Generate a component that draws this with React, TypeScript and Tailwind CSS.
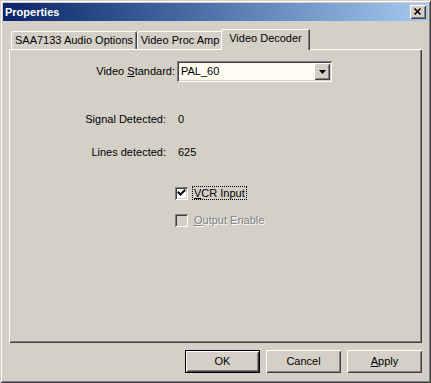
import React from "react";

const raised =
  "shadow-[inset_1px_1px_#ffffff,inset_-1px_-1px_#404040,inset_2px_2px_#d4d0c8,inset_-2px_-2px_#808080]";
const sunken =
  "shadow-[inset_1px_1px_#808080,inset_-1px_-1px_#ffffff,inset_2px_2px_#404040,inset_-2px_-2px_#d4d0c8]";

function Check() {
  return (
    <svg width="13" height="13" viewBox="0 0 13 13" className="block">
      <path d="M3.5 5.5 L5.5 7.5 L9.5 3.5" stroke="#000" strokeWidth="2" fill="none" strokeLinecap="square" />
    </svg>
  );
}

export default function App() {
  return (
    <div className="w-[431px] h-[383px] bg-[#d4d0c8] p-[3px] flex flex-col [font-family:'Liberation_Sans',Arial,sans-serif] text-[11px] leading-[13px] text-black shadow-[inset_1px_1px_#d4d0c8,inset_-1px_-1px_#404040,inset_2px_2px_#ffffff,inset_-2px_-2px_#808080]">
      {/* Title bar */}
      <div className="h-[18px] flex items-center justify-between pl-[2px] pr-[2px] bg-linear-to-r from-[#0a246a] to-[#a6caf0]">
        <span className="text-white font-bold text-[11px]">Properties</span>
        <div className={`w-[16px] h-[14px] bg-[#d4d0c8] ${raised} flex items-center justify-center`}>
          <svg width="16" height="14" viewBox="0 0 16 14" className="block">
            <path d="M4.5 3.5 L10.5 9.5 M10.5 3.5 L4.5 9.5" stroke="#000" strokeWidth="1.6" fill="none" />
          </svg>
        </div>
      </div>

      {/* Body */}
      <div className="flex-1 flex flex-col px-[6px]">
        {/* Tabs */}
        <div className="mt-[8px] h-[20px] flex items-end pl-[2px] relative z-10">
          <div className="w-[126px] h-[18px] rounded-t-[2px] flex items-center justify-center shadow-[inset_1px_1px_#ffffff,inset_-1px_0_#404040,inset_-2px_0_#808080]">
            SAA7133 Audio Options
          </div>
          <div className="w-[86px] h-[18px] rounded-t-[2px] flex items-center justify-center shadow-[inset_1px_1px_#ffffff,inset_-1px_0_#404040,inset_-2px_0_#808080]">
            Video Proc Amp
          </div>
          <div className="-ml-[2px] w-[89px] h-[21px] -mb-[1px] pb-[2px] rounded-t-[2px] bg-[#d4d0c8] flex items-center justify-center shadow-[inset_1px_1px_#ffffff,inset_-1px_0_#404040,inset_-2px_0_#808080]">
            Video Decoder
          </div>
        </div>

        {/* Panel */}
        <div className="h-[294px] bg-[#d4d0c8] flex flex-col shadow-[inset_1px_1px_#ffffff,inset_-1px_-1px_#404040,inset_-2px_-2px_#808080]">
          <div className="mt-[12px] flex items-center h-[21px]">
            <div className="w-[166px] text-right">
              Video <u>S</u>tandard:
            </div>
            <div className={`ml-[2px] w-[155px] h-[21px] bg-[#fffbf0] ${sunken} flex items-center p-[2px]`}>
              <span className="flex-1 pl-[2px]">PAL_60</span>
              <div className={`w-[16px] h-[17px] bg-[#d4d0c8] ${raised} flex items-center justify-center`}>
                <svg width="7" height="4" viewBox="0 0 7 4" className="block">
                  <path d="M0 0 H7 L3.5 4 Z" fill="#000" />
                </svg>
              </div>
            </div>
          </div>

          <div className="mt-[31px] flex items-center h-[13px]">
            <div className="w-[157px] text-right">Signal Detected:</div>
            <div className="ml-[12px]">0</div>
          </div>

          <div className="mt-[20px] flex items-center h-[13px]">
            <div className="w-[157px] text-right">Lines detected:</div>
            <div className="ml-[12px]">625</div>
          </div>

          <div className="mt-[27px] flex items-center h-[14px] pl-[166px]">
            <div className={`w-[13px] h-[13px] bg-white ${sunken}`}>
              <Check />
            </div>
            <div className="ml-[4px] border border-dotted border-black px-[1px] h-[14px] flex items-center">
              <span>
                <u>V</u>CR Input
              </span>
            </div>
          </div>

          <div className="mt-[13px] flex items-center h-[14px] pl-[166px]">
            <div className={`w-[13px] h-[13px] bg-[#d4d0c8] ${sunken}`} />
            <div className="ml-[5px] px-[1px] text-[#808080] [text-shadow:1px_1px_0_#ffffff]">
              <u>O</u>utput Enable
            </div>
          </div>
        </div>

        {/* Buttons */}
        <div className="mt-[7px] flex justify-end gap-[6px]">
          <div className="w-[75px] h-[23px] bg-[#d4d0c8] flex items-center justify-center shadow-[inset_0_0_0_1px_#000000,inset_2px_2px_#ffffff,inset_-2px_-2px_#404040,inset_3px_3px_#d4d0c8,inset_-3px_-3px_#808080]">
            OK
          </div>
          <div className={`w-[75px] h-[23px] bg-[#d4d0c8] flex items-center justify-center ${raised}`}>
            Cancel
          </div>
          <div className={`w-[75px] h-[23px] bg-[#d4d0c8] flex items-center justify-center ${raised}`}>
            <span>
              <u>A</u>pply
            </span>
          </div>
        </div>
      </div>
    </div>
  );
}
